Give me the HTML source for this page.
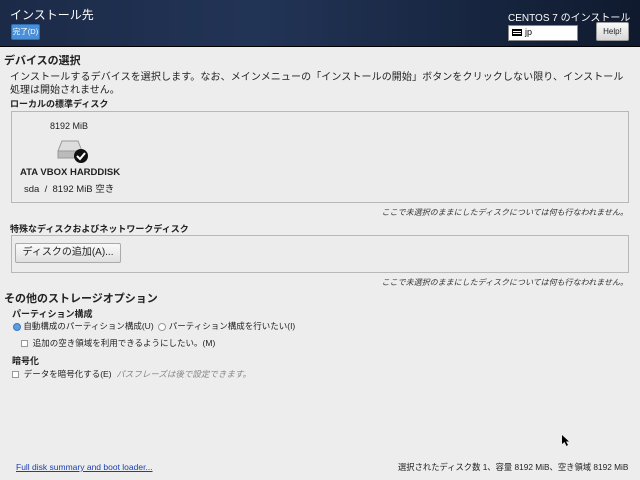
<!DOCTYPE html><html><head><meta charset="utf-8"><style>
*{margin:0;padding:0;box-sizing:border-box}
body{width:640px;height:480px;overflow:hidden;background:#ededed;font-family:"Liberation Sans","Noto Sans CJK JP",sans-serif;font-size:9px;color:#222;position:relative}
.a{position:absolute;white-space:nowrap}
.hdr{position:absolute;left:0;top:0;width:640px;height:47px;background:linear-gradient(90deg,#1b2a47 0%,#223456 40%,#15233c 80%,#0f1a2e 100%);border-bottom:1px solid #000}
.box{position:absolute;border:1px solid #b8b8b8;background:#ececec}
b{font-weight:bold}
.radio{display:inline-block;width:8px;height:8px;border:1px solid #999;border-radius:50%;background:#fff;vertical-align:middle}
.chk{display:inline-block;width:7px;height:7px;border:1px solid #999;background:#fff;vertical-align:middle}
</style></head><body>
<div class="hdr"></div>
<div class="a" style="left:10px;top:6px;color:#fff;font-size:12px">インストール先</div>
<div class="a" style="left:11px;top:24px;width:29px;height:16px;background:#4a90d9;border:1px solid #2c6cb5;border-radius:2px;color:#fff;font-size:7.5px;text-align:center;line-height:14px;overflow:hidden">完了(D)</div>
<div class="a" style="left:508px;top:9px;color:#fff;font-size:10px">CENTOS 7 のインストール</div>
<div class="a" style="left:508px;top:25px;width:70px;height:16px;background:#fff;border:1px solid #888"></div>
<div class="a" style="left:512px;top:29px;width:10px;height:7px;background:repeating-linear-gradient(#000 0 1px,#fff 1px 2px);border:1px solid #000"></div>
<div class="a" style="left:525px;top:27px;font-size:9px;color:#000">jp</div>
<div class="a" style="left:596px;top:22px;width:33px;height:19px;background:linear-gradient(#fafafa,#d8d8d8);border:1px solid #999;border-radius:2px;font-size:8px;text-align:center;line-height:17px;color:#222">Help!</div>
<div class="a" style="left:4px;top:52px;font-size:11px"><b>デバイスの選択</b></div>
<div class="a" style="left:10px;top:68px;font-size:10px;letter-spacing:0.1px">インストールするデバイスを選択します。なお、メインメニューの「インストールの開始」ボタンをクリックしない限り、インストール</div>
<div class="a" style="left:10px;top:81px;font-size:10px">処理は開始されません。</div>
<div class="a" style="left:10px;top:97px;font-size:9px"><b>ローカルの標準ディスク</b></div>
<div class="box" style="left:11px;top:111px;width:618px;height:92px"></div>
<div class="a" style="left:50px;top:121px">8192 MiB</div>
<svg class="a" style="left:56px;top:137px" width="34" height="28"><path d="M6 4 L22 4 L26 14 L2 14 Z" fill="#ddd" stroke="#999"/><rect x="2" y="14" width="24" height="7" fill="#bbb" stroke="#999"/><circle cx="25" cy="19" r="7" fill="#111"/><path d="M21 19 l3 3 l5 -6" stroke="#fff" stroke-width="2" fill="none"/></svg>
<div class="a" style="left:20px;top:167px;font-size:9.5px"><b>ATA VBOX HARDDISK</b></div>
<div class="a" style="left:24px;top:181px;font-size:9.5px">sda &nbsp;/ &nbsp;8192 MiB 空き</div>
<div class="a" style="right:12px;top:207px;font-size:8px;font-style:italic;color:#333">ここで未選択のままにしたディスクについては何も行なわれません。</div>
<div class="a" style="left:10px;top:222px;font-size:9px"><b>特殊なディスクおよびネットワークディスク</b></div>
<div class="box" style="left:11px;top:235px;width:618px;height:38px"></div>
<div class="a" style="left:15px;top:243px;width:106px;height:20px;background:linear-gradient(#fafafa,#e0e0e0);border:1px solid #aaa;border-radius:2px;font-size:10px;line-height:18px;text-align:center">ディスクの追加(A)...</div>
<div class="a" style="right:12px;top:277px;font-size:8px;font-style:italic;color:#333">ここで未選択のままにしたディスクについては何も行なわれません。</div>
<div class="a" style="left:4px;top:290px;font-size:11px"><b>その他のストレージオプション</b></div>
<div class="a" style="left:12px;top:307px;font-size:9px"><b>パーティション構成</b></div>
<div class="a" style="left:13px;top:320px;font-size:8.5px"><span class="radio" style="background:#5a9ee0;border-color:#3a78c0"></span> 自動構成のパーティション構成(U) &nbsp;<span class="radio"></span> パーティション構成を行いたい(I)</div>
<div class="a" style="left:21px;top:337px;font-size:8.5px"><span class="chk"></span> &nbsp;追加の空き領域を利用できるようにしたい。(M)</div>
<div class="a" style="left:12px;top:354px;font-size:9px"><b>暗号化</b></div>
<div class="a" style="left:12px;top:368px;font-size:8.5px"><span class="chk"></span> &nbsp;データを暗号化する(E) &nbsp;<i style="color:#888">パスフレーズは後で設定できます。</i></div>
<div class="a" style="left:16px;top:462px;font-size:8.5px;color:#1a3fb0;text-decoration:underline">Full disk summary and boot loader...</div>
<div class="a" style="left:398px;top:461px;font-size:8.3px">選択されたディスク数 1、容量 8192 MiB、空き領域 8192 MiB</div>
<svg class="a" style="left:561px;top:434px" width="9" height="13"><path d="M1 1 L1 10 L3.5 8 L5.5 12 L7 11 L5 7.5 L8 7.5 Z" fill="#000"/></svg>
</body></html>
